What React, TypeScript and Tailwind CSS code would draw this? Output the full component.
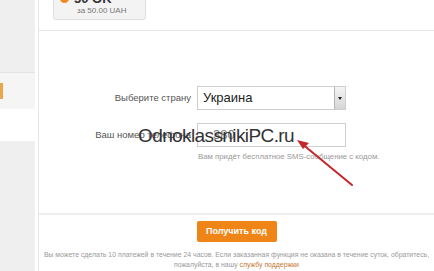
import React from "react";

export default function App() {
  return (
    <div
      className="relative flex h-[271px] w-[434px] overflow-hidden bg-white"
      style={{ fontFamily: '"Liberation Sans", Arial, sans-serif' }}
    >
      {/* Sidebar */}
      <div className="flex w-[35px] shrink-0 flex-col">
        <div className="h-[73px] border-b border-[#e2e2e2] bg-[#efefef]" />
        <div className="flex h-[36px] items-center bg-[#f5f5f5]">
          <div className="h-[16px] w-[3px] bg-[#e9a64a]" />
        </div>
        <div className="h-[32px] bg-white" />
        <div className="flex-1 bg-[#efefef]" />
      </div>
      <div className="w-[3px] shrink-0" />
      <div className="w-px shrink-0 bg-[#e6e6e6]" />

      {/* Main */}
      <div className="flex flex-1 flex-col">
        <div className="h-[31px] border-b border-[#e6e6e6]">
          <div className="ml-[14px] mt-[-13px] flex h-[33px] w-[93px] flex-col rounded-b-[3px] border border-[#dedede] bg-[#f3f3f3] px-[6px] pt-[4px]">
            <div className="flex items-center gap-[5px]">
              <div className="h-[9px] w-[9px] rounded-full bg-[#f08a1c]" />
              <span className="text-[13px] font-bold leading-[13px] text-[#333]">50 OK</span>
            </div>
            <span className="ml-[17px] mt-[1px] text-[8px] leading-[10px] text-[#777]">за 50.00 UAH</span>
          </div>
        </div>

        {/* Country row */}
        <div className="mt-[55px] flex items-center">
          <div className="w-[152px] text-right text-[9.5px] text-[#555]">Выберите страну</div>
          <div className="ml-[6px] flex h-[24px] w-[149px] items-center border border-[#cfcfcf] bg-white">
            <span className="flex-1 pl-[5px] text-[13px] text-[#222]">Украина</span>
            <div className="flex h-[22px] w-[11px] items-center justify-center border-l border-[#b5b5b5] bg-gradient-to-b from-[#f4f4f4] to-[#d6d6d6]">
              <div className="h-0 w-0 border-x-[2px] border-t-[3px] border-x-transparent border-t-[#222]" />
            </div>
          </div>
        </div>

        {/* Phone row */}
        <div className="mt-[13px] flex items-center">
          <div className="w-[152px] text-right text-[9.5px] text-[#555]">Ваш номер телефона</div>
          <div className="ml-[6px] flex h-[24px] w-[149px] items-center border border-[#cfcfcf] bg-white">
            <span className="pl-[15px] text-[13px] text-[#777]">380</span>
          </div>
        </div>
        <div className="ml-[159px] mt-[5px] text-[7.8px] leading-[10px] text-[#999]">
          Вам придёт бесплатное SMS-сообщение с кодом.
        </div>

        <div className="mt-[51px] h-[2px] bg-[#eeeeee]" />

        <div className="mt-[6px] flex justify-center">
          <button className="h-[21px] w-[80px] rounded-[2px] bg-[#ef8517] text-[9px] font-bold text-white">
            Получить код
          </button>
        </div>

        <div className="mt-[8px] text-center text-[6.9px] leading-[10px] text-[#999]">
          Вы можете сделать 10 платежей в течение 24 часов. Если заказанная функция не оказана в течение суток, обратитесь,
          <br />
          пожалуйста, в нашу <span className="text-[#c4762c]">службу поддержки</span>
        </div>
      </div>

      {/* Watermark */}
      <div className="pointer-events-none absolute left-[138px] top-[124px] text-[19px] leading-[24px] tracking-[-0.6px] text-[#333]">
        OdnoklassnikiPC.ru
      </div>

      {/* Red arrow */}
      <svg className="pointer-events-none absolute left-0 top-0" width="434" height="271">
        <line x1="352" y1="185" x2="301" y2="143" stroke="#c3262c" strokeWidth="2" strokeLinecap="round" />
        <polygon points="297,140 309,143 303,149" fill="#c3262c" />
      </svg>
    </div>
  );
}
